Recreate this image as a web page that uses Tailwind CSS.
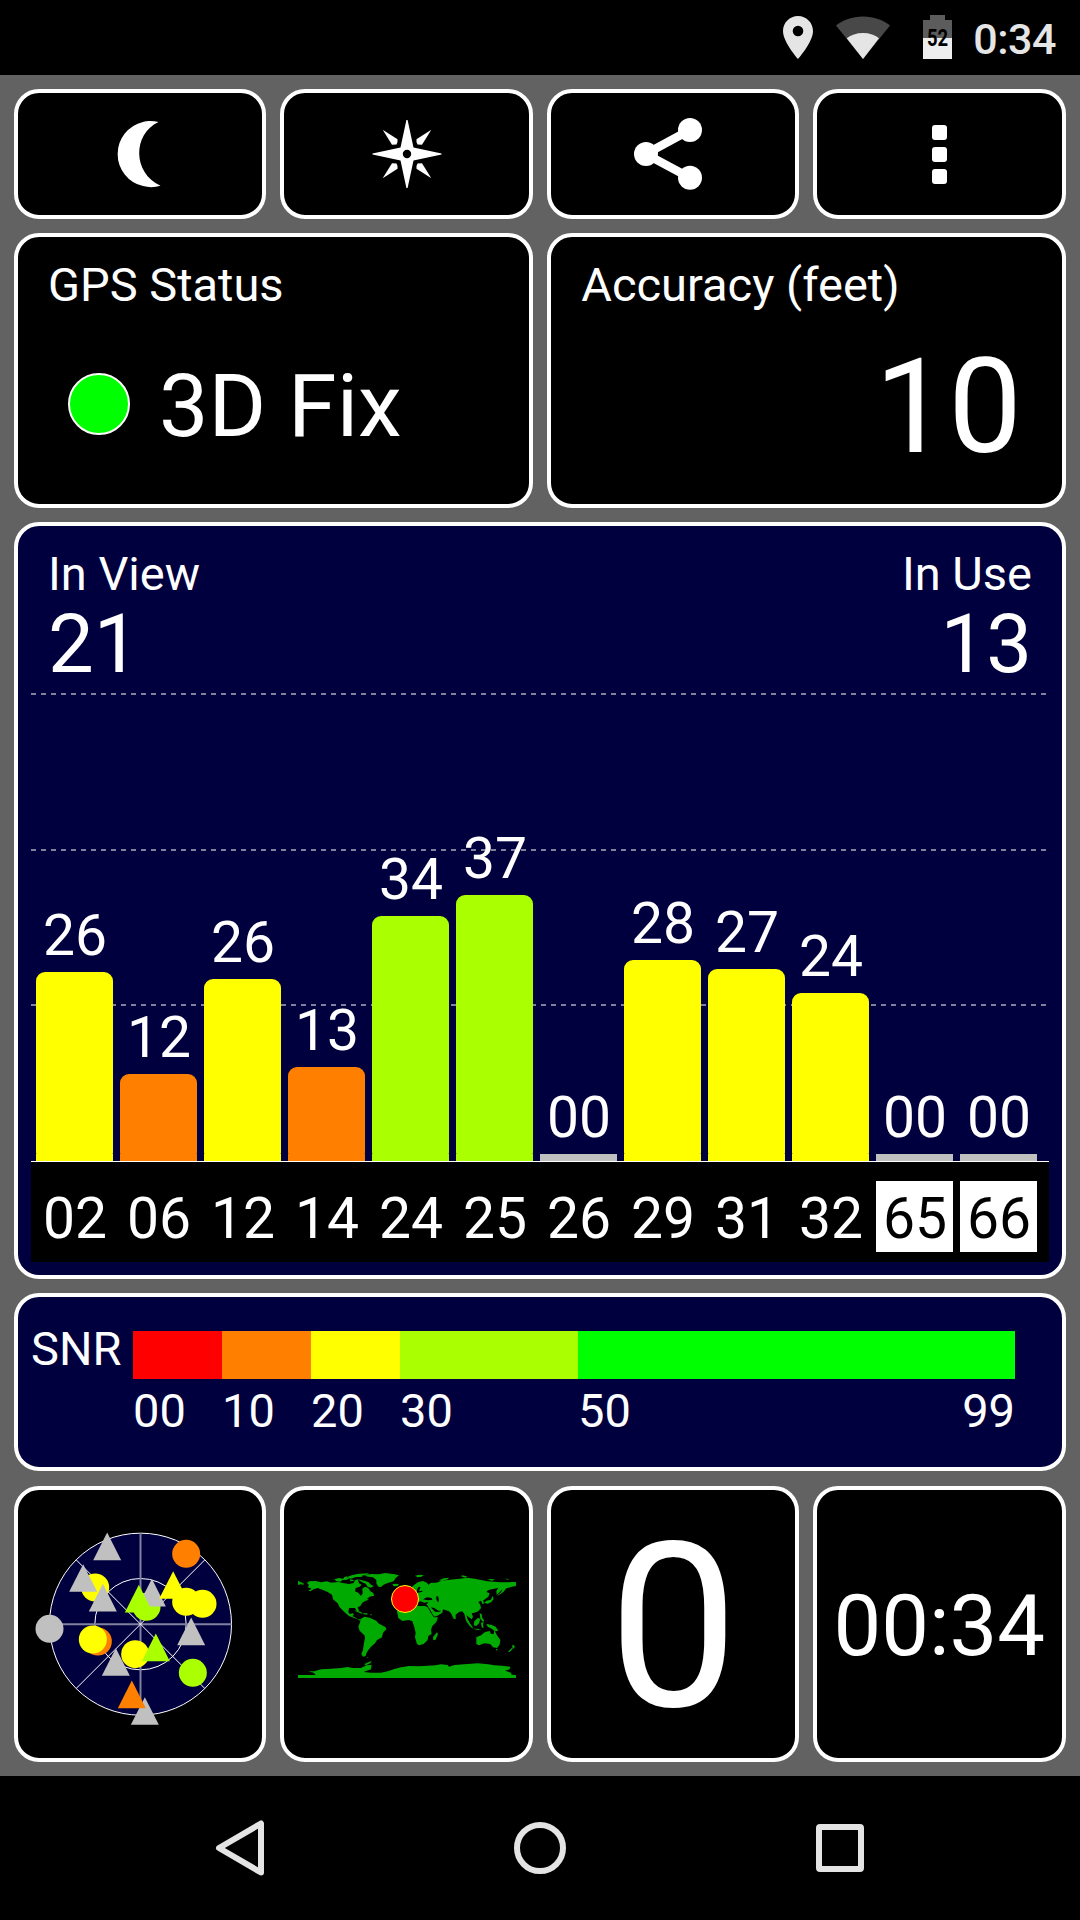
<!DOCTYPE html>
<html lang="en">
<head>
  <meta charset="UTF-8"/>
  <meta name="viewport" content="width=device-width, initial-scale=1"/>
  <title>GPS Test</title>
  <script src="https://cdn.jsdelivr.net/npm/@tailwindcss/browser@4"></script>
</head>
<body class="bg-black text-white font-['Roboto',sans-serif] leading-none w-[1080px] h-[1920px] overflow-hidden">

  <!-- status bar -->
  <header class="h-[75px] flex items-start justify-end pr-[24px] text-[#e5e5e5]">
    <svg class="w-[30px] h-[43px] mt-[16px]" viewBox="0 0 30 43" fill="currentColor">
      <path fill-rule="evenodd" d="M15 0C6.700 0 0 6.700 0 15c0 11.200 15 28 15 28s15-16.800 15-28C30 6.700 23.300 0 15 0zm0 9.700a5.300 5.300 0 1 1 0 10.600 5.300 5.300 0 0 1 0-10.600z"/>
    </svg>
    <svg class="w-[54px] h-[43px] mt-[16px] ml-[23px]" viewBox="0 0 54 43">
      <path fill="#484848" d="M0 9.500C7 4 16 .5 27 .5S47 4 54 9.500L27 43z"/>
      <path fill="#e5e5e5" d="M10.700 22.300C15 19 20.500 17 27 17s12 2 16 5.300L27 43z"/>
    </svg>
    <div class="relative w-[29px] h-[44px] mt-[15px] ml-[33px]">
      <svg class="w-[29px] h-[44px]" viewBox="0 0 29 44">
        <path fill="#5c5c5c" d="M7 0h15v5h7v39H0V5h7z"/>
        <path fill="#eee" d="M0 23h29v21H0z"/>
      </svg>
      <span class="absolute left-[4px] top-[12px] text-[23px] font-bold text-black origin-left scale-x-80">52</span>
    </div>
    <span class="text-[43px] font-medium mt-[18px] ml-[21px] tracking-[-0.5px]">0:34</span>
  </header>

  <main class="h-[1701px] bg-[#626262] pl-[14px] pr-[14.5px] pt-[14px] flex flex-col gap-[14px]">

    <!-- toolbar -->
    <div class="grid grid-cols-4 gap-x-[14px] h-[130px]">
      <button class="bg-black border-4 border-white rounded-[25px] flex items-center justify-center">
        <svg class="w-[80px] h-[80px]" viewBox="100 114 80 80"><path fill="#fff" d="M158.500 122C153 120.500 147 120.800 143 121.900A33 33 0 0 0 143 186.100C149 187.800 155 187.500 160.500 185.800C132.500 173 132.500 134 158.500 122z"/></svg>
      </button>
      <button class="bg-black border-4 border-white rounded-[25px] flex items-center justify-center">
        <svg class="w-[80px] h-[80px]" viewBox="-40 -40 80 80" fill="#fff">
          <path fill-rule="evenodd" d="M-.6-34h1.200L6.500-6.500 34.500-.6V.6L6.500 6.500 .6 34H-.6L-6.500 6.500-34.500.6V-.6L-6.500-6.500zM0-4.200a4.200 4.200 0 1 0 0 8.400 4.200 4.200 0 0 0 0-8.400z"/>
          <path id="ray" d="M-24.300-24.300L-9.500-14.700V-12L-10.500-9.500-15-9.200z"/>
          <use href="#ray" transform="scale(-1 1)"/>
          <use href="#ray" transform="scale(1 -1)"/>
          <use href="#ray" transform="scale(-1 -1)"/>
        </svg>
      </button>
      <button class="bg-black border-4 border-white rounded-[25px] flex items-center justify-center">
        <svg class="w-[80px] h-[80px]" viewBox="633 114 80 80" fill="#fff">
          <path d="M690 130L645.700 154 690 177.700" fill="none" stroke="#fff" stroke-width="8.500"/>
          <circle cx="646" cy="154" r="12"/><circle cx="690" cy="130" r="12"/><circle cx="690" cy="177.700" r="12"/>
        </svg>
      </button>
      <button class="bg-black border-4 border-white rounded-[25px] flex flex-col items-center justify-center gap-[7px]">
        <span class="size-[15px] rounded-[3px] bg-white"></span>
        <span class="size-[15px] rounded-[3px] bg-white"></span>
        <span class="size-[15px] rounded-[3px] bg-white"></span>
      </button>
    </div>

    <!-- fix + accuracy -->
    <div class="grid grid-cols-2 gap-x-[14px] h-[275px]">
      <section class="bg-black border-4 border-white rounded-[25px] pt-[24px] pl-[30px]">
        <h2 class="text-[47px]">GPS Status</h2>
        <div class="flex items-start mt-[54px] ml-[20px]">
          <span class="size-[62px] mt-[11px] rounded-full bg-[#00ff00] border-2 border-white"></span>
          <span class="text-[88px] ml-[29px]">3D Fix</span>
        </div>
      </section>
      <section class="bg-black border-4 border-white rounded-[25px] pt-[24px] pl-[30.5px] pr-[39.5px]">
        <h2 class="text-[47px]">Accuracy (feet)</h2>
        <p class="text-[131px] text-right mt-[34px]">10</p>
      </section>
    </div>

    <!-- satellite signal chart -->
    <section class="h-[757px] bg-[#00003f] border-4 border-white rounded-[25px] pt-[24px]">
      <div class="flex justify-between pl-[30px] pr-[29.5px] h-[143px] text-[47px]">
        <div>
          <h2>In View</h2>
          <p class="text-[81.5px] mt-[7px]">21</p>
        </div>
        <div class="text-right">
          <h2>In Use</h2>
          <p class="text-[81.5px] mt-[7px]">13</p>
        </div>
      </div>
      <div class="relative h-[469px] ml-[13px] mr-[12.5px] border-b border-white">
        <div class="absolute inset-x-0 top-0 h-[2px] bg-[repeating-linear-gradient(90deg,#ffffff80_0_5px,transparent_5px_10px)]"></div>
        <div class="absolute inset-x-0 top-[156px] h-[2px] bg-[repeating-linear-gradient(90deg,#ffffff80_0_5px,transparent_5px_10px)]"></div>
        <div class="absolute inset-x-0 top-[311px] h-[2px] bg-[repeating-linear-gradient(90deg,#ffffff80_0_5px,transparent_5px_10px)]"></div>
        <div id="bars" class="relative h-full flex items-end gap-[7px] pl-[5px] text-[57px]"></div>
      </div>
      <div id="prns" class="h-[100px] bg-black ml-[13px] mr-[12.5px] pl-[5px] pt-[19px] flex gap-[7px] text-[57px]"></div>
    </section>

    <!-- SNR legend -->
    <section class="h-[178px] bg-[#00003f] border-4 border-white rounded-[25px] pt-[34px] pl-[13px] flex text-[47px]">
      <span class="w-[102px] mt-[-6px]">SNR</span>
      <div class="w-[882px]">
        <div class="flex h-[48px]">
          <span class="w-[89px] bg-[#ff0000]"></span>
          <span class="w-[89px] bg-[#ff8000]"></span>
          <span class="w-[89px] bg-[#ffff00]"></span>
          <span class="w-[178px] bg-[#aaff00]"></span>
          <span class="flex-1 bg-[#00ff00]"></span>
        </div>
        <div class="flex mt-[8px]">
          <span class="w-[89px]">00</span>
          <span class="w-[89px]">10</span>
          <span class="w-[89px]">20</span>
          <span class="w-[178px]">30</span>
          <span class="flex-1">50</span>
          <span>99</span>
        </div>
      </div>
    </section>

    <!-- page shortcuts -->
    <div class="grid grid-cols-4 gap-x-[14px] h-[276px] mt-[1px]">
      <div class="bg-black border-4 border-white rounded-[25px] flex items-center justify-center">
        <svg class="w-[213px] h-[213px]" viewBox="40.500 53.500 639 639">
          <circle cx="360" cy="372" r="273" fill="#00003f" stroke="#fff" stroke-width="3"/>
          <circle cx="360" cy="372" r="137" fill="none" stroke="#fff" stroke-width="3"/>
          <path d="M360 99v546M87 372h546" stroke="#8080a0" stroke-width="6"/>
          <path d="M167 179L553 565M553 179L167 565" stroke="#fff" stroke-width="3"/>
          <g id="sky"></g>
        </svg>
      </div>
      <div class="bg-black border-4 border-white rounded-[25px] flex items-center justify-center pt-[2px]">
        <svg class="w-[218px] h-[105px]" viewBox="51 69 654 315" fill="#00aa00">
          <!-- americas -->
          <path d="M78 99L84 94 104 93 120 97 138 94 150 98 172 96 186 99 204 102 218 99 222 91 230 88 234 100 242 104 236 110 224 114 222 124 232 128 240 138 245 130 244 116 252 110 262 114 268 124 276 128 280 137 266 140 258 146 264 150 254 152 244 158 238 168 230 172 234 182 228 184 222 174 204 174 202 186 206 192 216 190 219 194 214 198 226 204 230 208 240 208 238 212 226 206 204 198 190 186 176 172 170 160 156 148 153 134 140 126 126 120 110 114 98 118 88 124 82 122 92 116 80 112 84 106z"/>
          <path d="M240 206L250 200 266 203 286 212 292 220 314 232 316 238 306 248 303 262 288 270 282 280 270 290 262 300 256 310 254 318 246 320 241 312 246 300 248 284 252 264 250 256 236 242 232 230 236 220z"/>
          <path d="M160 88l14-4 12 2 8-5 12 3-8 5-14 1-6 5-12-1zM200 80l14-5 20-4 26-1 6 3-18 3-12 4-14 2-12 4-6-2zM206 88l10 1 4 4-12 1zM230 88l14 3 18 5 8 8 8 4-8 5-10-3-6-9-12-5zM222 180l18 6 6 6-8-2-14-6zM246 190l14 0-2 4-10-1zM268 193h4v3h-4zM188 82l10-3 2 2-8 3zM232 78l10-1 3 3-10 1z"/>
          <path d="M250 77L270 72 292 73 314 69 330 71 342 73 354 76 344 84 338 94 320 99 308 104 300 111 292 110 286 100 286 90 276 82 262 80zM334 103l10-2 10 2-4 5-12 1zM256 322l6 0-2 2z"/>
          <!-- europe and asia -->
          <path d="M372 128L384 124 396 118 402 116 392 112 400 104 412 96 426 93 438 98 442 104 450 98 466 98 482 92 500 90 520 88 536 86 560 83 580 86 600 90 620 94 640 95 660 97 680 97 692 96 705 96 705 108 692 110 680 114 664 118 654 128 647 134 646 122 652 114 640 116 622 120 616 126 626 130 622 140 612 148 606 152 610 160 604 162 600 152 592 156 598 164 600 174 592 184 580 188 572 190 576 200 572 208 562 200 556 196 560 208 566 218 562 218 554 206 550 192 544 184 534 186 524 194 524 208 518 206 510 190 504 184 486 178 484 188 468 198 458 200 446 178 438 164 424 162 412 156 404 160 390 160 372 162 350 168 345 154 362 150 360 142z"/>
          <path d="M402 77l12-3 14 1-6 5-12 2zM474 91l14-6 16-2-4 5-18 5zM542 76l16 3-4 4-12-3zM620 88l14-1 8 2-10 3zM672 86l12 1-4 2zM664 118l8-5 4 2-8 10-14 10-6 2 12-10zM616 152l14-3 4-12 4 10-8 10-10 4-10-2z"/>
          <path d="M51 92l6 3 12 6-2 3-8-1-8 2zM355 130l10-10 6 12-10 6z"/>
          <path fill="#000" d="M408 158l10-4 12 4 12-2-6 8-12 4-14-4zM426 148l12-6 14 2 2 5-14 2zM466 138l6 2 2 14-4 2-4-8zM438 172l4 0 10 16 6 10 2 2-4 0zM450 172l10 2 12 8 8 0-6 4-12-1-10-10zM408 118l6-8 4 2-4 12 10-2 0 3-16 4z"/>
          <!-- africa -->
          <path d="M348 184L358 166 376 160 402 160 410 168 432 168 440 172 448 186 458 202 471 202 466 216 454 228 450 240 452 252 442 258 440 270 428 282 414 286 408 282 402 262 404 248 400 232 394 214 384 210 364 213 352 204zM468 247l3 4-7 18-7 2-1-10z"/>
          <!-- islands and australia -->
          <path d="M552 204l8 6 14 20 2 6-10-8-10-14zM576 236l12 0 14 4-12 0zM580 214l10-10 8 2-4 14-8 8-8-2zM596 190l6 2 2 12 6 8-4 4-8-10zM600 218l8-2-2 8 2 10-6-2zM616 222l14 2 14 6 8 12-10 2-10-8-12-6z"/>
          <path d="M586 262L600 256 612 246 626 243 630 252 638 252 640 241 648 256 658 270 656 284 648 294 636 292 628 282 610 280 594 286 586 282zM644 297l6 0-3 5zM694 284l8 4-4 8-4 0zM692 294l2 4-8 8-5-1z"/>
          <!-- antarctica -->
          <path d="M51 384V375H104L98 368 82 364 100 364 120 358 150 356 180 354 200 351 214 354 240 354 256 346 272 344 270 358 248 366 270 368 300 368 320 364 340 357 360 352 384 348 412 349 440 347 464 346 480 343 500 345 504 350 520 345 560 342 590 340 622 343 640 346 664 347 688 350 686 358 672 362 690 368 692 374 705 375V384z"/>
          <path d="M250 342l22-10-4 8-14 6z"/>
          <circle cx="372" cy="147" r="40.500" fill="#f00" stroke="#ff0" stroke-width="3"/>
        </svg>
      </div>
      <div class="bg-black border-4 border-white rounded-[25px] flex items-center justify-center text-[231px] pt-[7px] pl-[1px]">0</div>
      <div class="bg-black border-4 border-white rounded-[25px] flex items-center justify-center text-[85px] pt-[4px]">00:34</div>
    </div>
  </main>

  <!-- navigation bar -->
  <nav class="h-[144px] grid grid-cols-[215px_49px_250px_52px_250px_48px] items-center">
    <svg class="col-start-2 w-[49px] h-[56px]" viewBox="0 0 49 56" fill="none" stroke="#e4e4e4" stroke-width="6" stroke-linejoin="round"><path d="M46 3.500V52.500L4 28z"/></svg>
    <span class="col-start-4 size-[52px] rounded-full border-6 border-[#e4e4e4]"></span>
    <span class="col-start-6 size-[48px] rounded-[4px] border-6 border-[#e4e4e4]"></span>
  </nav>

  <script>
    // h is the bar height in px
    const sats = [
      { prn: '02', snr: '26', h: 189 },
      { prn: '06', snr: '12', h: 87 },
      { prn: '12', snr: '26', h: 182 },
      { prn: '14', snr: '13', h: 94 },
      { prn: '24', snr: '34', h: 245 },
      { prn: '25', snr: '37', h: 266 },
      { prn: '26', snr: '00', h: 7 },
      { prn: '29', snr: '28', h: 201 },
      { prn: '31', snr: '27', h: 192 },
      { prn: '32', snr: '24', h: 168 },
      { prn: '65', snr: '00', h: 7 },
      { prn: '66', snr: '00', h: 7 },
    ];

    function barColor(snr){
      if(snr>=30) return 'bg-[#aaff00]';
      if(snr>=20) return 'bg-[#ffff00]';
      if(snr>=10) return 'bg-[#ff8000]';
      return 'bg-[#c0c0c0]';
    }

    document.getElementById('bars').innerHTML = sats.map(s=>`
      <div class="w-[77px] flex flex-col">
        <span class="text-center pl-[1px] mb-[8px]">${s.snr}</span>
        <div class="rounded-t-[9px] rounded-b-[1px] ${barColor(+s.snr)}" style="height:${s.h-7}px"></div>
        <div class="h-[7px] ${barColor(+s.snr)}"></div>
      </div>`).join('');

    // GLONASS satellites (65+) are shown inverted
    document.getElementById('prns').innerHTML = sats.map(s=>`
      <span class="w-[77px] h-[71px] pt-[9px] pl-[1px] text-center ${+s.prn>=65 ? 'bg-white text-black' : ''}">${s.prn}</span>`).join('');

    const sky = [
      ['c',497,161,'#ff8000'], ['c',224,262,'#ffff00'], ['t',260,97,'#c0c0c0'],
      ['t',188,192,'#c0c0c0'], ['t',247,251,'#c0c0c0'], ['c',378,320,'#aaff00'],
      ['t',394,236,'#c0c0c0'], ['t',355,254,'#aaff00'], ['t',458,213,'#ffff00'],
      ['c',497,305,'#ffff00'], ['c',546,311,'#ffff00'], ['c',87,386,'#c0c0c0'],
      ['c',232,424,'#ff8000'], ['c',217,418,'#ffff00'], ['t',512,352,'#c0c0c0'],
      ['c',344,462,'#ffff00'], ['t',406,400,'#aaff00'], ['t',286,444,'#c0c0c0'],
      ['c',517,518,'#aaff00'], ['t',373,591,'#c0c0c0'], ['t',334,541,'#ff8000'],
    ];
    document.getElementById('sky').innerHTML = sky.map(([k,x,y,c])=> k==='c'
      ? `<circle cx="${x}" cy="${y}" r="42" fill="${c}"/>`
      : `<path d="M${x} ${y}l42 83h-84z" fill="${c}"/>`).join('');
  </script>

</body>
</html>
